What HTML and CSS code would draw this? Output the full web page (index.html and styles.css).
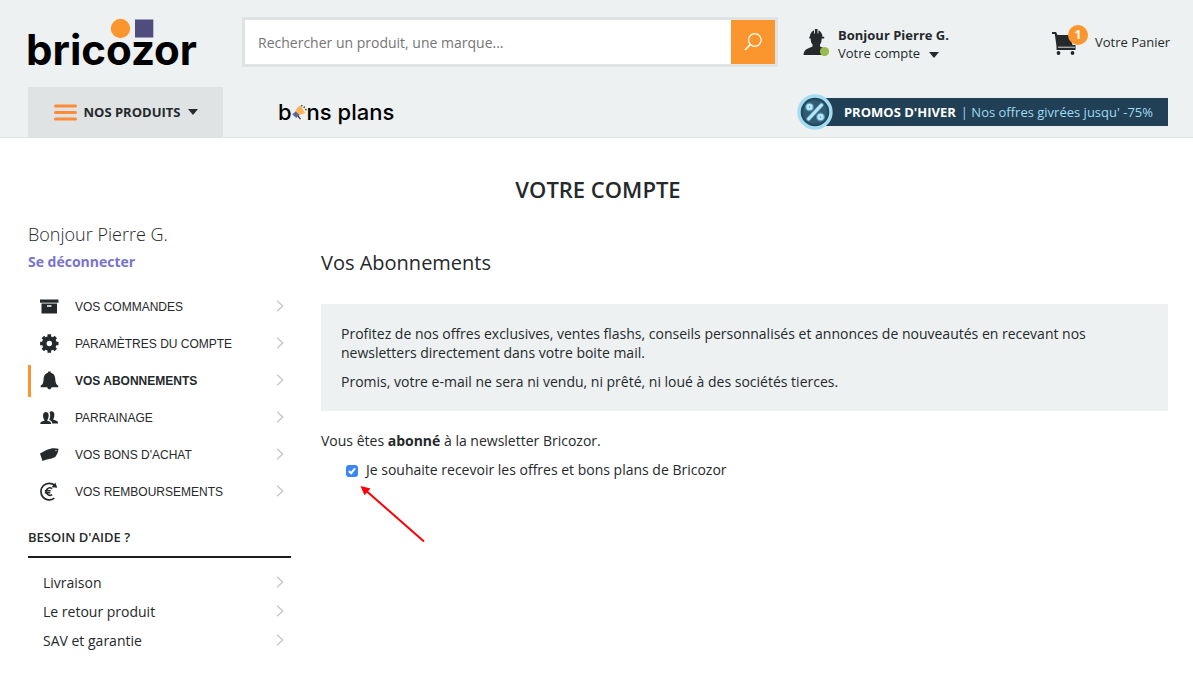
FILE: index.html
```html
<!DOCTYPE html>
<html lang="fr">
<head>
    <meta charset="UTF-8">
    <meta name="viewport" content="width=device-width, initial-scale=1.0">
    <title>Vos Abonnements - Bricozor</title>
    <link rel="stylesheet" href="styles.css">
</head>

<body>
    <svg class="sprite" aria-hidden="true">
        <symbol id="chevron" viewBox="0 0 8 12">
            <path d="M1.2 0.8 L6.6 6 L1.2 11.2" fill="none" stroke="#c6cacb" stroke-width="1.5"/>
        </symbol>
    </svg>

    <header class="header">
        <div class="header-top">
            <a href="#" class="logo" aria-label="Bricozor">
                <svg width="184" height="64" viewBox="-4 0 184 64">
                    <text x="-2" y="48" class="logo-text">bricozor</text>
                    <circle cx="92.5" cy="11.5" r="9.7" fill="#fb962e"/>
                    <rect x="107" y="2.5" width="18.3" height="18" fill="#4f4c7e"/>
                </svg>
            </a>
            <form class="search">
                <input type="text" class="search-input" placeholder="Rechercher un produit, une marque..." aria-label="Rechercher">
                <button type="submit" class="search-button" aria-label="Valider">
                    <svg width="18" height="18" viewBox="0 0 18 18" fill="none" stroke="#fff">
                        <circle cx="10.8" cy="7" r="6.3" stroke-width="1.2"/>
                        <path d="M6.3 11.5 L1 17" stroke-width="1.7"/>
                    </svg>
                </button>
            </form>
            <a href="#" class="account">
                <svg width="27" height="27" viewBox="0 0 27 27">
                    <path fill="#25292b" d="M0.5 26 C1 21 3 20 9.5 17.5 V15.5 C8 14 7.8 12 7.7 9.5 H6.2 V7.7 H6.9 C7 4.5 8.7 2.2 11 1.2 V4.5 H11.9 V0 H14.5 V4.5 H15.4 V1.2 C17.7 2.2 19.3 4.5 19.4 7.7 H21.2 V9.5 H18.7 C18.6 12 18.3 14 17 15.5 V17.5 L20 18.8 L24 26 Z"/>
                    <circle cx="21.5" cy="22.5" r="4.6" fill="#98bb4d"/>
                </svg>
                <span class="account-text">
                    <strong>Bonjour Pierre G.</strong>
                    <span>Votre compte <i class="caret"></i></span>
                </span>
            </a>
            <a href="#" class="cart">
                <span class="cart-icon">
                    <svg width="25" height="23" viewBox="0 0 25 23">
                        <path fill="#25292b" d="M0 0 H4 L5.5 3 H18 L20.5 13 H23.5 V18 H4.5 L4.5 14.5 L2.8 2 H0 Z"/>
                        <path d="M6 15.2 H23" stroke="#edf1f2" stroke-width="0.9"/>
                        <circle cx="6.5" cy="21" r="1.9" fill="#25292b"/>
                        <circle cx="20.5" cy="21" r="1.9" fill="#25292b"/>
                    </svg>
                    <span class="cart-badge">1</span>
                </span>
                <span>Votre Panier</span>
            </a>
        </div>

        <nav class="header-nav">
            <button type="button" class="products">
                <svg width="23" height="17" viewBox="0 0 23 17" stroke="#ff8b38" stroke-width="3" stroke-linecap="round">
                    <path d="M1.5 2 H21.5 M1.5 8.5 H21.5 M1.5 15 H21.5"/>
                </svg>
                <span>NOS PRODUITS</span>
                <i class="caret"></i>
            </button>
            <a href="#" class="bons-plans" aria-label="bons plans">
                <span>b</span>
                <svg width="15" height="16" viewBox="0 0 16 16">
                    <path fill="#fcb454" d="M6 3 L9 1 L14 9 L7.5 11.5 L3 8 Z"/>
                    <path fill="#64619a" d="M4 7.5 L8 11.3 L4.5 14.5 L0.3 10.5 Z"/>
                    <path stroke="#222" stroke-width="1.2" d="M6.5 12.5 L9 15.5 M10.5 0.5 V2 M12.5 3.5 L13.5 2.3 M14 5.5 H15.5"/>
                </svg>
                <span>ns plans</span>
            </a>
            <a href="#" class="promo">
                <svg class="promo-badge" width="36" height="36" viewBox="0 0 36 36">
                    <circle cx="18" cy="18" r="16" fill="#244a61" stroke="#a5dcf0" stroke-width="3.4"/>
                    <circle cx="18" cy="18" r="12" fill="#3d6b82" opacity="0.5"/>
                    <g fill="none" stroke="#64b5dd" stroke-width="4.6" stroke-linecap="round" opacity="0.6">
                        <path d="M24.5 11 L11.5 25"/>
                        <circle cx="12.5" cy="13" r="2.2"/>
                        <circle cx="23.5" cy="23" r="2.2"/>
                    </g>
                    <g fill="none" stroke="#b9e8fa" stroke-width="2.5" stroke-linecap="round">
                        <path d="M24.5 11 L11.5 25" stroke-width="3"/>
                        <circle cx="12.5" cy="13" r="2"/>
                        <circle cx="23.5" cy="23" r="2"/>
                    </g>
                </svg>
                <strong>PROMOS D'HIVER</strong>
                <span>| Nos offres givrées jusqu' -75%</span>
            </a>
        </nav>
    </header>

    <main class="main">
        <h1>VOTRE COMPTE</h1>
        <div class="columns">
            <aside class="sidebar">
                <p class="hello">Bonjour Pierre G.</p>
                <a href="#" class="logout">Se déconnecter</a>
                <ul class="menu">
                    <li><a href="#">
                        <svg width="20" height="20" viewBox="0 0 20 20" fill="#25292b"><path d="M1 2.5 H19.5 V5.7 H1 Z"/><path fill-rule="evenodd" d="M2.5 6.6 H18 V16.5 H2.5 Z M8 8.2 V9.7 H12.5 V8.2 Z"/></svg>
                        <span>VOS COMMANDES</span>
                        <svg class="chevron"><use href="#chevron"/></svg>
                    </a></li>
                    <li><a href="#">
                        <svg width="20" height="20" viewBox="0 0 20 20">
                            <circle cx="10.3" cy="9.5" r="5" fill="none" stroke="#25292b" stroke-width="4.6"/>
                            <path stroke="#25292b" stroke-width="3.6" d="M10.3 0.3 V3.5 M10.3 15.5 V18.7 M1.1 9.5 H4.3 M16.3 9.5 H19.5 M3.8 3 L6 5.2 M14.6 13.8 L16.8 16 M16.8 3 L14.6 5.2 M6 13.8 L3.8 16"/>
                        </svg>
                        <span>PARAMÈTRES DU COMPTE</span>
                        <svg class="chevron"><use href="#chevron"/></svg>
                    </a></li>
                    <li class="active"><a href="#">
                        <svg width="20" height="20" viewBox="0 0 20 20" fill="#25292b"><path d="M9.1 0.4 H11.7 V1.8 C15 2.5 16.1 5.2 16.3 8.2 C16.5 12.2 17.5 13.5 19.2 14.5 V16.2 H12.5 C12 19 8.8 19 8.3 16.2 H1.7 V14.5 C3.5 13.5 4.4 12.2 4.6 8.2 C4.8 5.2 5.8 2.5 9.1 1.8 Z"/></svg>
                        <span>VOS ABONNEMENTS</span>
                        <svg class="chevron"><use href="#chevron"/></svg>
                    </a></li>
                    <li><a href="#">
                        <svg width="20" height="20" viewBox="0 0 20 20" fill="#25292b"><path d="M1.3 16 C1.3 13.5 2.8 13.5 5.8 12.4 C4.1 10.5 3.8 8 4.2 6 C4.8 3.3 8.9 3.3 9.5 6 C9.9 8 9.6 10.5 8 12.4 C11 13.5 12.2 13.7 12.2 16 Z"/><path d="M10.5 4 C12.3 2.6 15.2 3.4 15.3 6.1 C15.4 8.3 15.2 10.2 14 11.6 C17.3 12.8 19.2 13 19.2 15.4 H13.3 C13.2 13.4 12 12.6 10.2 11.9 C11.5 9.5 11.5 6.3 10.5 4 Z"/></svg>
                        <span>PARRAINAGE</span>
                        <svg class="chevron"><use href="#chevron"/></svg>
                    </a></li>
                    <li><a href="#">
                        <svg width="20" height="20" viewBox="0 0 20 20"><path fill="#25292b" d="M1 8.5 C5.5 6 9.5 3.6 13.5 3.2 C16 3 18 3.3 19.5 3.8 C19.3 7 18.3 9.5 16.2 12 C12.5 14 8 14 3.5 16 Z"/><circle cx="17" cy="5.6" r="0.7" fill="#fff"/></svg>
                        <span>VOS BONS D'ACHAT</span>
                        <svg class="chevron"><use href="#chevron"/></svg>
                    </a></li>
                    <li><a href="#">
                        <svg width="20" height="20" viewBox="0 0 20 20" fill="none" stroke="#25292b">
                            <path stroke-width="1.7" d="M15.8 3.5 A8.3 8.3 0 1 0 15.3 16.2"/>
                            <path fill="#25292b" stroke="none" d="M16.3 0.5 L18.3 5.7 L12.7 5.2 Z"/>
                            <path stroke-width="1.6" d="M13.1 6.6 A3.7 3.7 0 1 0 13.1 12.6 M5.8 8.8 H11.6 M5.8 10.8 H11.3"/>
                        </svg>
                        <span>VOS REMBOURSEMENTS</span>
                        <svg class="chevron"><use href="#chevron"/></svg>
                    </a></li>
                </ul>
                <h2 class="help-title">BESOIN D'AIDE ?</h2>
                <ul class="help">
                    <li><a href="#"><span>Livraison</span><svg class="chevron"><use href="#chevron"/></svg></a></li>
                    <li><a href="#"><span>Le retour produit</span><svg class="chevron"><use href="#chevron"/></svg></a></li>
                    <li><a href="#"><span>SAV et garantie</span><svg class="chevron"><use href="#chevron"/></svg></a></li>
                </ul>
            </aside>

            <section class="content">
                <h2>Vos Abonnements</h2>
                <div class="info">
                    <p>Profitez de nos offres exclusives, ventes flashs, conseils personnalisés et annonces de nouveautés en recevant nos newsletters directement dans votre boite mail.</p>
                    <p>Promis, votre e-mail ne sera ni vendu, ni prêté, ni loué à des sociétés tierces.</p>
                </div>
                <p class="status">Vous êtes <strong>abonné</strong> à la newsletter Bricozor.</p>
                <div class="choice">
                    <input type="checkbox" id="newsletter" checked>
                    <label for="newsletter">Je souhaite recevoir les offres et bons plans de Bricozor</label>
                    <svg class="arrow" width="66" height="58" viewBox="0 0 66 58">
                        <path d="M64 56.5 L7 6.5" stroke="#fb0006" stroke-width="2"/>
                        <path d="M0.5 1 L10.5 3.5 L4.5 10.3 Z" fill="#fb0006"/>
                    </svg>
                </div>
            </section>
        </div>
    </main>
</body>
</html>
```
FILE: styles.css
```css
* {
    box-sizing: border-box;
}

body {
    margin: 0;
    font-family: "Open Sans", "Noto Sans", sans-serif;
    font-size: 14px;
    line-height: 19px;
    color: #25292b;
    background-color: #fff;
}

a {
    color: inherit;
    text-decoration: none;
}

ul {
    list-style: none;
    margin: 0;
    padding: 0;
}

p, h1, h2 {
    margin: 0;
}

svg {
    display: block;
    flex: none;
}

.sprite {
    position: absolute;
    width: 0;
    height: 0;
}

.caret {
    display: inline-block;
    border: 5px solid transparent;
    border-top: 6px solid #25292b;
    border-bottom: 0;
}

/* header */
.header {
    padding: 17px 25px 0 28px;
    background-color: #edf1f2;
    border-bottom: 1px solid #dfe3e4;
    font-size: 13px;
    line-height: 18px;
}

.header-top {
    display: flex;
    align-items: center;
}

.logo {
    width: 214px;
    height: 50px;
}

.logo svg {
    margin-left: -4px;
}

.logo-text {
    font-family: Inter, sans-serif;
    font-size: 42px;
    font-weight: 700;
    fill: #000;
}

.search {
    display: flex;
    flex: 1;
    height: 50px;
    border: 3px solid #dfe3e4;
    background-color: #fff;
}

.search-input {
    flex: 1;
    min-width: 0;
    padding: 2px 13px 0;
    border: 0;
    background: none;
    font: inherit;
    font-size: 14px;
}

.search-input::placeholder {
    color: #757575;
}

.search-button {
    display: flex;
    align-items: center;
    justify-content: center;
    width: 44px;
    padding: 0;
    border: 0;
    background-color: #fb962e;
    cursor: pointer;
}

.account {
    display: flex;
    align-items: center;
    gap: 8px;
    width: 249px;
    margin-left: 25px;
}

.account-text {
    display: flex;
    flex-direction: column;
    padding-top: 4px;
}

.account .caret {
    margin-left: 5px;
}

.cart {
    display: flex;
    align-items: center;
    gap: 18px;
    width: 116px;
    white-space: nowrap;
}

.cart-icon {
    position: relative;
    padding-top: 2px;
}

.cart-badge {
    position: absolute;
    top: -5px;
    left: 16px;
    width: 20px;
    height: 20px;
    border-radius: 50%;
    background-color: #fb962e;
    color: #fff;
    font-size: 12px;
    font-weight: 700;
    line-height: 20px;
    text-align: center;
}

.header-nav {
    display: flex;
    align-items: center;
    margin-top: 20px;
}

.products {
    display: flex;
    align-items: center;
    justify-content: center;
    gap: 7px;
    width: 195px;
    height: 50px;
    border: 0;
    background-color: #dfe3e4;
    font: inherit;
    font-weight: 700;
    color: inherit;
    cursor: pointer;
}

.bons-plans {
    display: flex;
    align-items: center;
    margin-left: 55px;
    font-family: Inter, sans-serif;
    font-size: 22px;
    font-weight: 500;
    color: #000;
}

.promo {
    position: relative;
    display: flex;
    align-items: center;
    gap: 5px;
    height: 28px;
    margin-left: auto;
    padding: 0 15px 0 28px;
    background-color: #213f55;
    color: #9fdcf2;
}

.promo strong {
    color: #fff;
}

.promo-badge {
    position: absolute;
    top: -4px;
    left: -19px;
}

/* page */
.main {
    padding: 36px 25px 30px 28px;
}

h1 {
    font-size: 22px;
    font-weight: 600;
    line-height: 30px;
    text-align: center;
}

.columns {
    display: flex;
    gap: 30px;
    padding-top: 18px;
}

.sidebar {
    flex: none;
    width: 263px;
}

.hello {
    font-size: 18px;
    font-weight: 300;
    line-height: 24px;
}

.logout {
    display: block;
    margin-top: 6px;
    font-weight: 700;
    color: #7773cc;
}

.menu {
    display: flex;
    flex-direction: column;
    gap: 5px;
    margin-top: 20px;
    font-family: "Liberation Sans", Arial, sans-serif;
    font-size: 12px;
}

.menu a {
    display: flex;
    align-items: center;
    gap: 16px;
    height: 32px;
    padding: 0 7px 0 8px;
    border-left: 3px solid transparent;
}

.menu .active a {
    border-left-color: #fb962e;
    font-weight: 700;
}

.chevron {
    width: 8px;
    height: 12px;
    margin-bottom: 2px;
    margin-left: auto;
}

.help-title {
    margin-top: 20px;
    padding-bottom: 9px;
    border-bottom: 2px solid #1d1d1f;
    font-size: 13px;
    font-weight: 600;
}

.help {
    padding: 10px 7px 0 15px;
}

.help a {
    display: flex;
    align-items: center;
    height: 29px;
}

.content {
    flex: 1;
    padding-top: 27px;
}

.content h2 {
    font-size: 20px;
    font-weight: 400;
    line-height: 28px;
}

.info {
    margin-top: 27px;
    padding: 20px;
    background-color: #edf1f2;
}

.info p + p {
    margin-top: 10px;
}

.status {
    margin-top: 20px;
}

.choice {
    position: relative;
    display: flex;
    align-items: center;
    gap: 8px;
    margin-top: 10px;
    padding-left: 25px;
}

.choice input {
    appearance: none;
    display: flex;
    justify-content: center;
    width: 12px;
    height: 12px;
    margin: 2px 0 0;
    border-radius: 3px;
    background-color: #3b86f7;
}

.choice input:checked::after {
    content: "";
    width: 2px;
    height: 5px;
    margin-top: 2px;
    border: solid #fff;
    border-width: 0 2px 2px 0;
    transform: rotate(40deg);
}

/* points at the checkbox */
.arrow {
    position: absolute;
    top: 25px;
    left: 39px;
}
```
